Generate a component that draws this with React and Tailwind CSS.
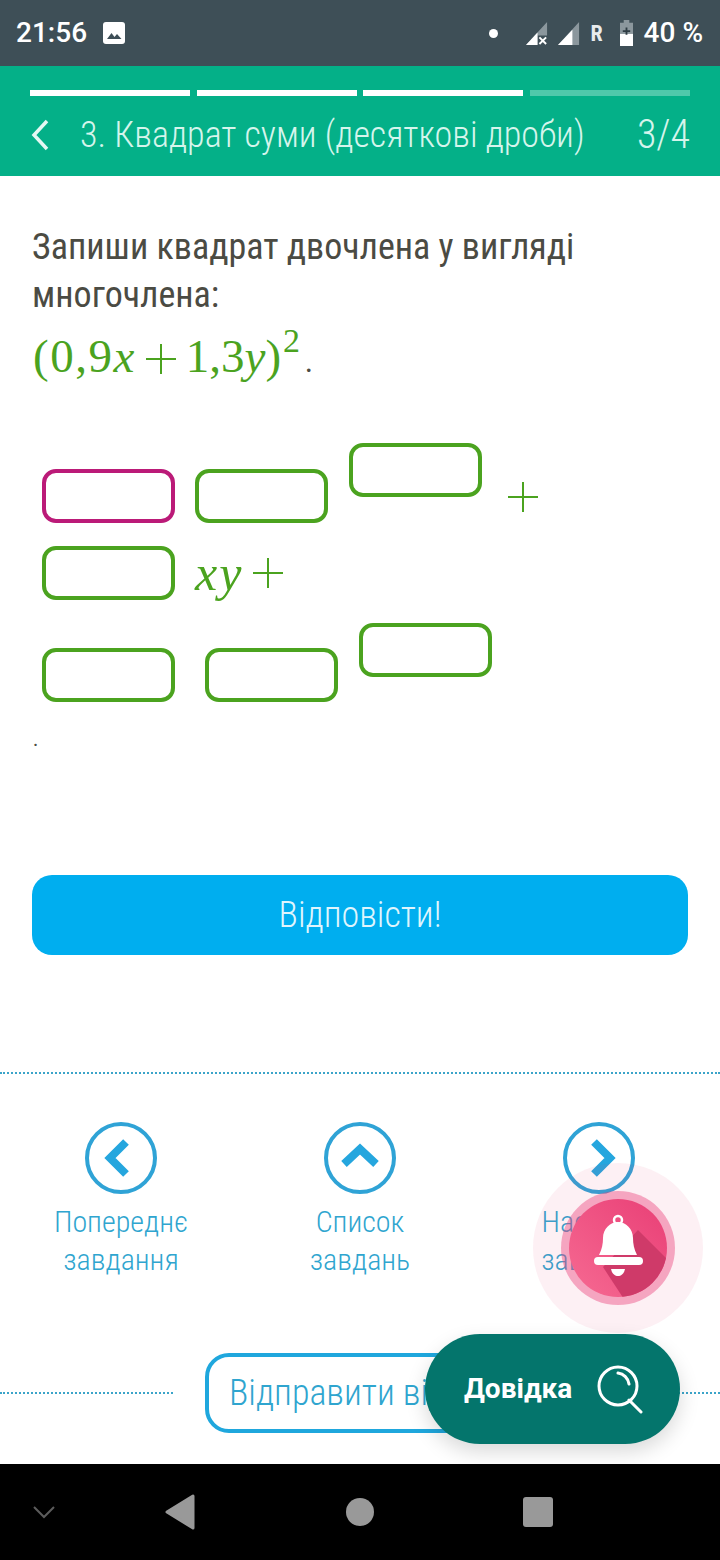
import React from "react";

const Blank = ({ color = "border-[#4ba31f]", className = "" }) => (
  <div className={`w-[133px] h-[54px] shrink-0 rounded-[14px] border-4 bg-white ${color} ${className}`} />
);

const Plus = ({ className = "" }) => (
  <svg width="30" height="30" viewBox="0 0 30 30" className={className}>
    <path d="M0 15H30M15 0V30" stroke="#4ba31f" strokeWidth="2" />
  </svg>
);

const NavItem = ({ icon, children }) => (
  <div className="w-[239px] flex flex-col items-center">
    <svg width="72" height="72" viewBox="0 0 72 72">
      <circle cx="36" cy="36" r="34" fill="none" stroke="#2fa3d6" strokeWidth="4" />
      <path d={icon} fill="none" stroke="#25a6de" strokeWidth="8" />
    </svg>
    <p className="mt-[9px] text-center text-[30px] leading-[38px] font-light font-stretch-condensed text-[#2fa5cf]">
      {children}
    </p>
  </div>
);

export default function App() {
  return (
    <div className="relative w-[720px] h-[1560px] overflow-hidden flex flex-col bg-white font-['Roboto',sans-serif]">
      {/* status bar */}
      <div className="h-[66px] shrink-0 bg-[#3e4f57] flex items-center pl-4 pr-[17px] text-white">
        <span className="text-[28px] font-medium font-stretch-[90%]">21:56</span>
        <svg width="24" height="24" viewBox="0 0 24 24" className="ml-[15px]">
          <rect x="1" y="1" width="22" height="22" rx="3" fill="#fff" />
          <path d="M5 18l4.5-6 3 4 2.500-3 4.500 5z" fill="#3e4f57" />
        </svg>
        <span className="ml-auto w-[9px] h-[9px] rounded-full bg-white" />
        <svg width="23" height="23" viewBox="0 0 24 24" className="ml-[28px]">
          <path d="M0 24L22 0V14H12V24z" fill="#8b979d" />
          <path d="M0 24L12 11V24z" fill="#fff" />
          <path d="M14 16l7 7M21 16l-7 7" stroke="#fff" strokeWidth="2" />
        </svg>
        <svg width="23" height="23" viewBox="0 0 24 24" className="ml-[9px]">
          <path d="M0 24L22 0V24z" fill="#8b979d" />
          <path d="M0 24L15 8V24z" fill="#fff" />
        </svg>
        <span className="ml-[9px] text-[22px] font-bold text-[#e8ebec] font-stretch-[85%]">R</span>
        <svg width="15" height="26" viewBox="0 0 16 28" className="ml-[16px]">
          <path d="M5 0h6v3h4v25H1V3h4z" fill="#8b979d" />
          <path d="M1 15h14v13H1z" fill="#fff" />
          <path d="M8 8v8M4 12h8" stroke="#2f3d44" strokeWidth="2" />
        </svg>
        <span className="ml-[10px] text-[28px] font-medium font-stretch-[90%]">40 %</span>
      </div>

      {/* header */}
      <div className="h-[110px] shrink-0 bg-[#04b088] px-[30px] pt-6">
        <div className="flex">
          <div className="w-40 h-[6px] bg-white" />
          <div className="w-40 h-[6px] bg-white ml-[7px]" />
          <div className="w-40 h-[6px] bg-white ml-[6px]" />
          <div className="w-40 h-[6px] bg-[#4fc9ab] ml-[7px]" />
        </div>
        <div className="mt-[17px] flex items-center text-[#d5f5ec]">
          <svg width="20" height="32" viewBox="0 0 20 32" className="shrink-0">
            <path d="M17 2L4 16l13 14" fill="none" stroke="#e4f8f3" strokeWidth="3.500" />
          </svg>
          <span className="ml-[30px] whitespace-nowrap text-[36px] leading-[44px] font-light font-stretch-condensed">
            3. Квадрат суми (десяткові дроби)
          </span>
          <span className="ml-auto text-[40px] leading-[44px] font-light font-stretch-condensed">3/4</span>
        </div>
      </div>

      {/* task */}
      <div className="h-[699px] shrink-0 px-[33px] pt-[47px]">
        <p className="-ml-px text-[36px] leading-[48px] text-[#4b4b43] font-stretch-[80%]">
          Запиши квадрат двочлена у вигляді многочлена:
        </p>
        <p className="mt-[7px] h-[60px] flex items-baseline font-['Liberation_Serif',serif] text-[47px] leading-[60px] text-[#4ba31f]">
          <span className="tracking-[1.5px]">(0,9<i>x</i></span>
          <Plus className="mx-[10px] self-center translate-y-[3px]" />
          <span>1,3<i>y</i>)</span>
          <span className="text-[34px] leading-none relative -top-[20px] ml-[2px]">2</span>
          <span className="text-[#4b4b43] text-[30px] ml-[5px]">.</span>
        </p>

        <div className="mt-[57px] ml-[9px] flex flex-col">
          <div className="flex h-[80px]">
            <Blank color="border-[#bb1a78]" className="mt-[26px]" />
            <Blank className="mt-[26px] ml-5" />
            <Blank className="ml-[21px]" />
            <Plus className="ml-[26px] mt-[39px]" />
          </div>
          <div className="flex items-center mt-[23px] h-[54px]">
            <Blank />
            <span className="ml-5 font-['Liberation_Serif',serif] italic text-[50px] leading-none tracking-[2px] text-[#4ba31f]">xy</span>
            <Plus className="ml-[10px]" />
          </div>
          <div className="flex h-[79px] mt-[23px]">
            <Blank className="mt-[25px]" />
            <Blank className="mt-[25px] ml-[30px]" />
            <Blank className="ml-[21px]" />
          </div>
        </div>
        <p className="mt-[22px] text-[#4b4b43] text-[20px] leading-[30px]">.</p>
      </div>

      {/* answer */}
      <div className="mx-8 h-20 shrink-0 rounded-[20px] bg-[#00aeef] flex items-center justify-center text-[#dff5fd] text-[36px] font-light font-stretch-condensed">
        Відповісти!
      </div>

      {/* task navigation */}
      <div className="mt-[117px] border-t-2 border-dotted border-[#3ba4c9]" />
      <div className="mt-[48px] flex justify-center">
        <NavItem icon="M41 20L25 36l16 16">Попереднє<br />завдання</NavItem>
        <NavItem icon="M20 42l16-15 16 15">Список<br />завдань</NavItem>
        <NavItem icon="M31 20l16 16-16 16">Наступне<br />завдання</NavItem>
      </div>
      <div className="mt-[74px] flex items-center">
        <div className="w-[173px] border-t-2 border-dotted border-[#3ba4c9]" />
        <div className="ml-8 w-[310px] h-20 rounded-[24px] border-4 border-[#1fa7dd] pl-[20px] flex items-center whitespace-nowrap text-[36px] font-light font-stretch-condensed text-[#2fa5cf]">
          Відправити відгук
        </div>
        <div className="ml-8 flex-1 border-t-2 border-dotted border-[#3ba4c9]" />
      </div>

      {/* system nav */}
      <div className="mt-auto h-24 shrink-0 bg-black flex items-center">
        <svg width="24" height="14" viewBox="0 0 24 14" className="ml-8">
          <path d="M2 2l10 10L22 2" fill="none" stroke="#5c5c5c" strokeWidth="2" />
        </svg>
        <svg width="30" height="36" viewBox="0 0 30 36" className="ml-[109px]">
          <path d="M28 2v32L2 18z" fill="#999" stroke="#999" strokeWidth="3" strokeLinejoin="round" />
        </svg>
        <span className="ml-[151px] w-7 h-7 rounded-full bg-[#999]" />
        <span className="ml-[149px] w-[30px] h-[30px] rounded-[3px] bg-[#999]" />
      </div>

      {/* bell */}
      <svg width="170" height="170" viewBox="0 0 170 170" className="absolute left-[533px] top-[1163px]">
        <defs>
          <linearGradient id="bellFill" x1="0" y1="1" x2="1" y2="0">
            <stop offset="0" stopColor="#f66a92" />
            <stop offset="1" stopColor="#e93f76" />
          </linearGradient>
          <clipPath id="bellClip">
            <circle cx="85" cy="85" r="49" />
          </clipPath>
        </defs>
        <circle cx="85" cy="85" r="85" fill="#e93f76" fillOpacity="0.08" />
        <circle cx="85" cy="85" r="57" fill="#e93f76" fillOpacity="0.42" />
        <circle cx="85" cy="85" r="49" fill="url(#bellFill)" />
        <path d="M105 67L150 112 100 150 70 104z" fill="#cf3a69" clipPath="url(#bellClip)" />
        <circle cx="85" cy="57" r="4" fill="none" stroke="#fff" strokeWidth="2.500" />
        <path d="M66 92c3-6 4-11 4-17 0-9 7-16 15-16s15 7 15 16c0 6 1 11 4 17z" fill="#fff" />
        <rect x="61" y="94" width="49" height="8" rx="4" fill="#fff" />
        <path d="M78 106h14c-1 5-4 7-7 7s-6-2-7-7z" fill="#fff" />
      </svg>

      {/* help */}
      <div className="absolute left-[425px] top-[1334px] w-[255px] h-[110px] rounded-[55px] bg-[#04756c] shadow-[0_8px_20px_rgba(0,0,0,0.15)] flex items-center pl-[39px] text-white">
        <span className="text-[28px] font-bold font-stretch-[90%]">Довідка</span>
        <svg width="48" height="50" viewBox="0 0 48 50" className="ml-[25px]">
          <circle cx="21" cy="22" r="19" fill="none" stroke="#fff" strokeWidth="3" />
          <path d="M21 9a13 13 0 0 1 11 11M32 36l12 12" fill="none" stroke="#fff" strokeWidth="3" strokeLinecap="round" />
        </svg>
      </div>
    </div>
  );
}
